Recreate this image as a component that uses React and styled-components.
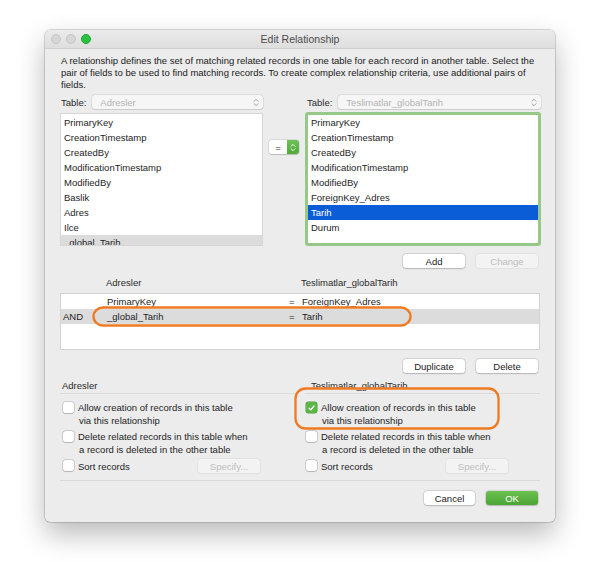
import React from 'react';
import styled, { createGlobalStyle } from 'styled-components';

const Global = createGlobalStyle`
  html, body { margin: 0; padding: 0; background: #ffffff; }
  body { font-family: "Liberation Sans", Arial, sans-serif; color: #1e1e1e; }
  * { box-sizing: border-box; }
`;

const Page = styled.div`
  width: 600px;
  height: 582px;
  padding: 30px 0 0 45px;
`;

const Window = styled.div`
  width: 510px;
  height: 492px;
  background: #ececec;
  border-radius: 5px;
  box-shadow: 0 0 0 0.5px rgba(0, 0, 0, 0.28), 0 12px 28px rgba(0, 0, 0, 0.28);
  display: flex;
  flex-direction: column;
  overflow: hidden;
`;

const TitleBar = styled.div`
  height: 19px;
  flex: none;
  display: grid;
  grid-template-columns: 1fr auto 1fr;
  align-items: center;
  background: linear-gradient(#ebebeb, #dedede);
  border-bottom: 1px solid #d0d0d0;
  padding: 0 6px;
`;

const Lights = styled.div`
  display: flex;
  gap: 5px;
`;

const Light = styled.span`
  width: 10px;
  height: 10px;
  border-radius: 50%;
  background: ${(p) => (p.$on ? '#2ac33f' : '#d6d6d6')};
  border: 0.5px solid ${(p) => (p.$on ? '#1fa633' : '#c4c4c4')};
`;

const Title = styled.div`
  font-size: 10.5px;
  color: #4b4b4b;
`;

const Body = styled.div`
  flex: 1;
  display: flex;
  flex-direction: column;
  padding: 6px 15px 0 15px;
`;

const Description = styled.p`
  margin: 0;
  font-size: 9.5px;
  line-height: 12px;
  color: #1a1a1a;
  padding-left: 1px;
`;

const TopGrid = styled.div`
  display: grid;
  grid-template-columns: 203px 42px 236px;
  grid-template-rows: 14px 134px;
  row-gap: 3px;
  margin-top: 4px;
`;

const TableRow = styled.div`
  display: flex;
  align-items: center;
  gap: 6px;
  padding-left: 1px;
  font-size: 9.5px;
  color: #2a2a2a;
  ${(p) => p.$span && 'grid-column: 2 / span 2; padding-left: 44px;'}
`;

const SelectBox = styled.div`
  flex: 1;
  height: 14px;
  background: #f6f6f6;
  border-radius: 3px;
  box-shadow: 0 0 0 0.5px rgba(0, 0, 0, 0.12), 0 0.5px 1px rgba(0, 0, 0, 0.08);
  display: flex;
  align-items: center;
  justify-content: space-between;
  padding: 0 4px 0 8px;
  color: #b3b3b3;
  font-size: 9.5px;
`;

const List = styled.div`
  background: #ffffff;
  border: ${(p) => (p.$focus ? '3px solid #96c887' : '1px solid #d6d6d6')};
  border-radius: ${(p) => (p.$focus ? '3px' : '0')};
  padding-top: ${(p) => (p.$focus ? 0 : 1)}px;
  overflow: hidden;
  margin-top: ${(p) => (p.$focus ? 0 : 1)}px;
`;

const ListItem = styled.div`
  height: 15px;
  line-height: 15px;
  font-size: 9.5px;
  padding-left: 3px;
  color: ${(p) => (p.$sel ? '#ffffff' : '#1e1e1e')};
  background: ${(p) => (p.$sel ? '#0b5dd7' : p.$gray ? '#dcdcdc' : 'transparent')};
`;

const Middle = styled.div`
  display: flex;
  justify-content: center;
  padding-top: 28px;
`;

const OpPopup = styled.div`
  width: 30px;
  height: 14px;
  display: flex;
  border-radius: 3px;
  overflow: hidden;
  box-shadow: 0 0 0 0.5px rgba(0, 0, 0, 0.15), 0 0.5px 1px rgba(0, 0, 0, 0.15);
  font-size: 9.5px;
`;

const OpValue = styled.div`
  flex: 1;
  background: #fff;
  display: flex;
  align-items: center;
  justify-content: center;
  color: #333;
`;

const OpArrow = styled.div`
  width: 12px;
  background: linear-gradient(#6dc257, #4fa93a);
  display: flex;
  align-items: center;
  justify-content: center;
`;

const ButtonRow = styled.div`
  display: flex;
  justify-content: flex-end;
  gap: 11px;
  padding-right: 2px;
  margin-top: ${(p) => p.$mt}px;
`;

const Button = styled.div`
  width: ${(p) => p.$w || 62}px;
  height: 14px;
  border-radius: 3px;
  display: flex;
  align-items: center;
  justify-content: center;
  font-size: 9.5px;
  color: ${(p) => (p.$disabled ? '#bdbdbd' : p.$primary ? '#ffffff' : '#222')};
  background: ${(p) =>
    p.$primary
      ? 'linear-gradient(#6cc150, #4ba434)'
      : p.$disabled
      ? '#f3f3f3'
      : '#ffffff'};
  box-shadow: ${(p) =>
    p.$disabled
      ? '0 0 0 0.5px rgba(0,0,0,0.08)'
      : '0 0 0 0.5px rgba(0,0,0,0.16), 0 0.5px 1.5px rgba(0,0,0,0.16)'};
`;

const RelGrid = styled.div`
  display: grid;
  grid-template-columns: 46px 182px 13px 1fr;
  align-items: center;
`;

const RelHeader = styled(RelGrid)`
  height: 12px;
  margin-top: 8px;
  font-size: 9.5px;
  color: #2a2a2a;
`;

const RelTable = styled.div`
  position: relative;
  height: 57px;
  margin-top: 5px;
  background: #fff;
  border: 1px solid #d3d3d3;
`;

const RelRow = styled(RelGrid)`
  height: 15px;
  font-size: 9.5px;
  color: #1e1e1e;
  background: ${(p) => (p.$gray ? '#dcdcdc' : 'transparent')};
`;

const Cell = styled.span`
  padding-left: ${(p) => p.$pl || 0}px;
`;

const Sections = styled.div`
  display: grid;
  grid-template-columns: 235px 235px;
  column-gap: 10px;
  margin-top: 7px;
`;

const Section = styled.div`
  position: relative;
  display: flex;
  flex-direction: column;
`;

const SectionLabel = styled.div`
  height: 14px;
  line-height: 12px;
  font-size: 9.5px;
  color: #2a2a2a;
  padding-left: ${(p) => p.$pl}px;
  border-bottom: 1px solid #dcdcdc;
`;

const Options = styled.div`
  display: flex;
  flex-direction: column;
  gap: 3px;
  padding: 7px 0 0 ${(p) => p.$pl}px;
`;

const Option = styled.div`
  display: flex;
  align-items: flex-start;
  gap: 4px;
  font-size: 9.5px;
  line-height: 13px;
  color: #1e1e1e;
  padding-right: ${(p) => p.$pr || 0}px;
`;

const OptionLines = styled.div`
  & > span {
    display: block;
  }
  & > span + span {
    padding-left: 1px;
  }
`;

const OptionText = styled.div`
  flex: 1;
  display: flex;
  align-items: center;
  justify-content: space-between;
`;

const Check = styled.span`
  flex: none;
  width: 11px;
  height: 11px;
  margin-top: 1px;
  border-radius: 2.5px;
  background: ${(p) => (p.$on ? '#5cb646' : '#ffffff')};
  box-shadow: ${(p) =>
    p.$on ? '0 0 0 0.5px #4a9c36' : '0 0 0 0.5px rgba(0,0,0,0.25), 0 0.5px 1px rgba(0,0,0,0.12)'};
  display: flex;
  align-items: center;
  justify-content: center;
`;

const Footer = styled.div`
  margin-top: 7px;
  border-top: 1px solid #d9d9d9;
  padding-top: 10px;
  display: flex;
  justify-content: flex-end;
  gap: 11px;
  padding-right: 2px;
`;

const Annotation = styled.svg`
  position: absolute;
  left: ${(p) => p.$x}px;
  top: ${(p) => p.$y}px;
  overflow: visible;
  pointer-events: none;
`;

const Chevrons = ({ color = '#9a9a9a' }) => (
  <svg width="6" height="9" viewBox="0 0 6 9">
    <path d="M1 3.3 L3 1.3 L5 3.3 M1 5.7 L3 7.7 L5 5.7" fill="none" stroke={color} strokeWidth="0.9" strokeLinecap="round" strokeLinejoin="round" />
  </svg>
);

const Oval = ({ x, y, w, h, id }) => (
  <Annotation $x={x} $y={y} width={w} height={h} viewBox={`0 0 ${w} ${h}`}>
    <defs>
      <filter id={id} x="-5%" y="-30%" width="110%" height="160%">
        <feTurbulence type="fractalNoise" baseFrequency="0.35" numOctaves="1" seed="5" result="n" />
        <feDisplacementMap in="SourceGraphic" in2="n" scale="1.4" />
      </filter>
    </defs>
    <rect
      x="1.5"
      y="1.5"
      width={w - 3}
      height={h - 3}
      rx={Math.min(10, h / 2.2)}
      fill="none"
      stroke="#f07a24"
      strokeWidth="2.3"
      filter={`url(#${id})`}
    />
  </Annotation>
);

const leftFields = [
  'PrimaryKey',
  'CreationTimestamp',
  'CreatedBy',
  'ModificationTimestamp',
  'ModifiedBy',
  'Baslik',
  'Adres',
  'Ilce',
  '_global_Tarih',
];

const rightFields = [
  'PrimaryKey',
  'CreationTimestamp',
  'CreatedBy',
  'ModificationTimestamp',
  'ModifiedBy',
  'ForeignKey_Adres',
  'Tarih',
  'Durum',
];

const OptionsBlock = ({ checked, pl, pr }) => (
  <Options $pl={pl}>
    <Option>
      <Check $on={checked}>
        {checked && (
          <svg width="7" height="6" viewBox="0 0 7 6">
            <path d="M1 3.2 L2.8 4.8 L6 1" fill="none" stroke="#fff" strokeWidth="1.3" strokeLinecap="round" strokeLinejoin="round" />
          </svg>
        )}
      </Check>
      <OptionLines>
        <span>Allow creation of records in this table</span>
        <span>via this relationship</span>
      </OptionLines>
    </Option>
    <Option>
      <Check />
      <OptionLines>
        <span>Delete related records in this table when</span>
        <span>a record is deleted in the other table</span>
      </OptionLines>
    </Option>
    <Option $pr={pr}>
      <Check />
      <OptionText>
        <span>Sort records</span>
        <Button $disabled $w={62}>Specify...</Button>
      </OptionText>
    </Option>
  </Options>
);

export default function App() {
  return (
    <Page>
      <Global />
      <Window>
        <TitleBar>
          <Lights>
            <Light />
            <Light />
            <Light $on />
          </Lights>
          <Title>Edit Relationship</Title>
          <div />
        </TitleBar>
        <Body>
          <Description>
            A relationship defines the set of matching related records in one table for each record in another table. Select the
            pair of fields to be used to find matching records. To create complex relationship criteria, use additional pairs of
            fields.
          </Description>

          <TopGrid>
            <TableRow>
              Table:
              <SelectBox>
                Adresler
                <Chevrons />
              </SelectBox>
            </TableRow>
            <TableRow $span>
              Table:
              <SelectBox>
                Teslimatlar_globalTarih
                <Chevrons />
              </SelectBox>
            </TableRow>

            <List>
              {leftFields.map((f, i) => (
                <ListItem key={f} $gray={i === leftFields.length - 1}>
                  {f}
                </ListItem>
              ))}
            </List>
            <Middle>
              <OpPopup>
                <OpValue>=</OpValue>
                <OpArrow>
                  <Chevrons color="#ffffff" />
                </OpArrow>
              </OpPopup>
            </Middle>
            <List $focus>
              {rightFields.map((f) => (
                <ListItem key={f} $sel={f === 'Tarih'}>
                  {f}
                </ListItem>
              ))}
            </List>
          </TopGrid>

          <ButtonRow $mt={8}>
            <Button>Add</Button>
            <Button $disabled>Change</Button>
          </ButtonRow>

          <RelHeader>
            <span />
            <span>Adresler</span>
            <span />
            <span>Teslimatlar_globalTarih</span>
          </RelHeader>

          <RelTable>
            <RelRow>
              <span />
              <Cell>PrimaryKey</Cell>
              <Cell>=</Cell>
              <Cell>ForeignKey_Adres</Cell>
            </RelRow>
            <RelRow $gray>
              <Cell $pl={2}>AND</Cell>
              <Cell>_global_Tarih</Cell>
              <Cell>=</Cell>
              <Cell>Tarih</Cell>
            </RelRow>
            <Oval id="o1" x={31} y={12} w={320} h={21} />
          </RelTable>

          <ButtonRow $mt={9}>
            <Button>Duplicate</Button>
            <Button>Delete</Button>
          </ButtonRow>

          <Sections>
            <Section>
              <SectionLabel $pl={2}>Adresler</SectionLabel>
              <OptionsBlock pl={3} pr={35} />
            </Section>
            <Section>
              <SectionLabel $pl={6}>Teslimatlar_globalTarih</SectionLabel>
              <OptionsBlock checked pl={1} pr={32} />
              <Oval id="o2" x={-11} y={7} w={206} h={43} />
            </Section>
          </Sections>

          <Footer>
            <Button $w={51}>Cancel</Button>
            <Button $w={52} $primary>OK</Button>
          </Footer>
        </Body>
      </Window>
    </Page>
  );
}
